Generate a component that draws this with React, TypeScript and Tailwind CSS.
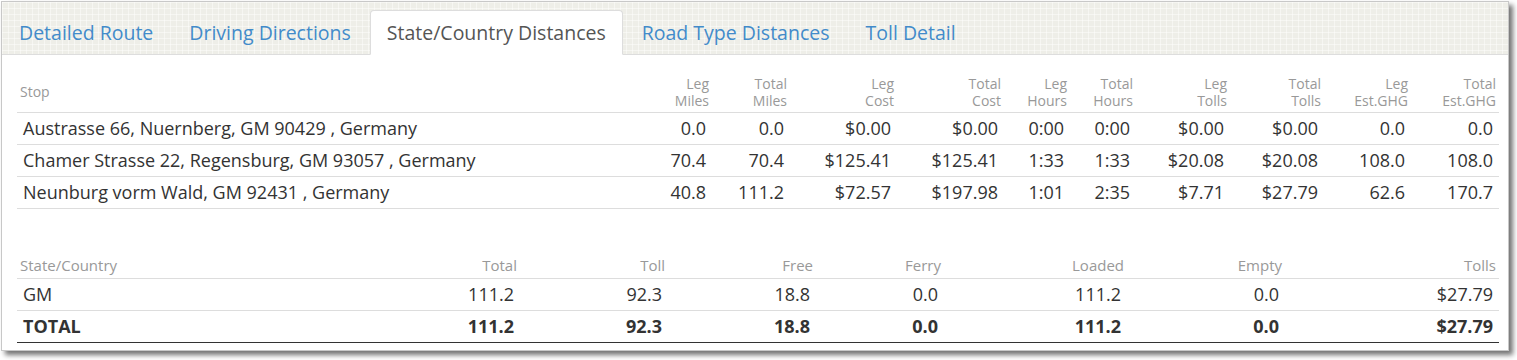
import React from "react";

const tabs = [
  "Detailed Route",
  "Driving Directions",
  "State/Country Distances",
  "Road Type Distances",
  "Toll Detail",
];

const cols1 = "grid grid-cols-[617px_78px_78px_107px_107px_66px_66px_94px_94px_87px_88px]";
const cols2 = "grid grid-cols-[355px_148px_148px_148px_128px_183px_158px_214px]";

const head1 = [
  ["Leg", "Miles"],
  ["Total", "Miles"],
  ["Leg", "Cost"],
  ["Total", "Cost"],
  ["Leg", "Hours"],
  ["Total", "Hours"],
  ["Leg", "Tolls"],
  ["Total", "Tolls"],
  ["Leg", "Est.GHG"],
  ["Total", "Est.GHG"],
];

const rows1 = [
  ["Austrasse 66, Nuernberg, GM 90429 , Germany", "0.0", "0.0", "$0.00", "$0.00", "0:00", "0:00", "$0.00", "$0.00", "0.0", "0.0"],
  ["Chamer Strasse 22, Regensburg, GM 93057 , Germany", "70.4", "70.4", "$125.41", "$125.41", "1:33", "1:33", "$20.08", "$20.08", "108.0", "108.0"],
  ["Neunburg vorm Wald, GM 92431 , Germany", "40.8", "111.2", "$72.57", "$197.98", "1:01", "2:35", "$7.71", "$27.79", "62.6", "170.7"],
];

const head2 = ["State/Country", "Total", "Toll", "Free", "Ferry", "Loaded", "Empty", "Tolls"];
const rowGM = ["GM", "111.2", "92.3", "18.8", "0.0", "111.2", "0.0", "$27.79"];
const rowTotal = ["TOTAL", "111.2", "92.3", "18.8", "0.0", "111.2", "0.0", "$27.79"];

export default function App() {
  return (
    <div
      className="w-[1517px] h-[360px] bg-white pt-px pl-px"
      style={{ fontFamily: '"Open Sans", "Noto Sans", sans-serif' }}
    >
      <div className="w-[1508px] h-[350px] border border-[#c8c8c8] bg-white shadow-[4px_4px_5px_rgba(0,0,0,0.55)]">
        {/* tab band */}
        <div className="h-[53px] border-b border-[#dddddd] bg-[#eeeee8] bg-[linear-gradient(90deg,rgba(255,255,255,0.45)_1px,transparent_1px),linear-gradient(rgba(255,255,255,0.45)_1px,transparent_1px)] bg-[size:6px_6px] flex items-end pt-2 pl-0">
          {tabs.map((t, i) => {
            const active = i === 2;
            return (
              <div
                key={t}
                className={
                  active
                    ? "h-[45px] -mb-px mr-[2px] px-4 flex items-center rounded-t-[4px] border border-[#dddddd] border-b-transparent bg-white text-[19.5px] text-[#555555] whitespace-nowrap"
                    : "h-[45px] -mb-px mr-[2px] px-4 flex items-center border border-transparent text-[19.5px] text-[#428bca] whitespace-nowrap"
                }
              >
                {t}
              </div>
            );
          })}
        </div>

        <div className="pl-[15px]">
          {/* table 1 */}
          <div className="w-[1482px] mt-4">
            <div className={`${cols1} h-[42px] items-center border-b border-[#dddddd] text-[14px] leading-[17px] text-[#999999]`}>
              <div className="px-[3px]">Stop</div>
              {head1.map((h, i) => (
                <div key={i} className="px-[3px] text-right">
                  <div>{h[0]}</div>
                  <div>{h[1]}</div>
                </div>
              ))}
            </div>
            {rows1.map((r, ri) => (
              <div
                key={ri}
                className={`${cols1} h-[32px] items-center border-b border-[#dddddd] text-[18px] text-[#333333]`}
              >
                {r.map((c, ci) => (
                  <div key={ci} className={ci === 0 ? "px-[6px] whitespace-nowrap" : "px-[6px] text-right whitespace-nowrap"}>
                    {c}
                  </div>
                ))}
              </div>
            ))}
          </div>

          {/* table 2 */}
          <div className="w-[1482px] mt-[44px]">
            <div className={`${cols2} h-[26px] items-center border-b border-[#dddddd] text-[15px] text-[#999999]`}>
              {head2.map((h, i) => (
                <div key={i} className={i === 0 ? "px-[3px]" : "px-[3px] text-right"}>
                  {h}
                </div>
              ))}
            </div>
            <div className={`${cols2} h-[32px] items-center border-b border-[#dddddd] text-[18px] text-[#333333]`}>
              {rowGM.map((c, i) => (
                <div key={i} className={i === 0 ? "px-[6px]" : "px-[6px] text-right"}>
                  {c}
                </div>
              ))}
            </div>
            <div className={`${cols2} h-[32px] items-center border-b border-[#333333] text-[18px] font-bold text-[#333333]`}>
              {rowTotal.map((c, i) => (
                <div key={i} className={i === 0 ? "px-[6px]" : "px-[6px] text-right"}>
                  {c}
                </div>
              ))}
            </div>
          </div>
        </div>
      </div>
    </div>
  );
}
